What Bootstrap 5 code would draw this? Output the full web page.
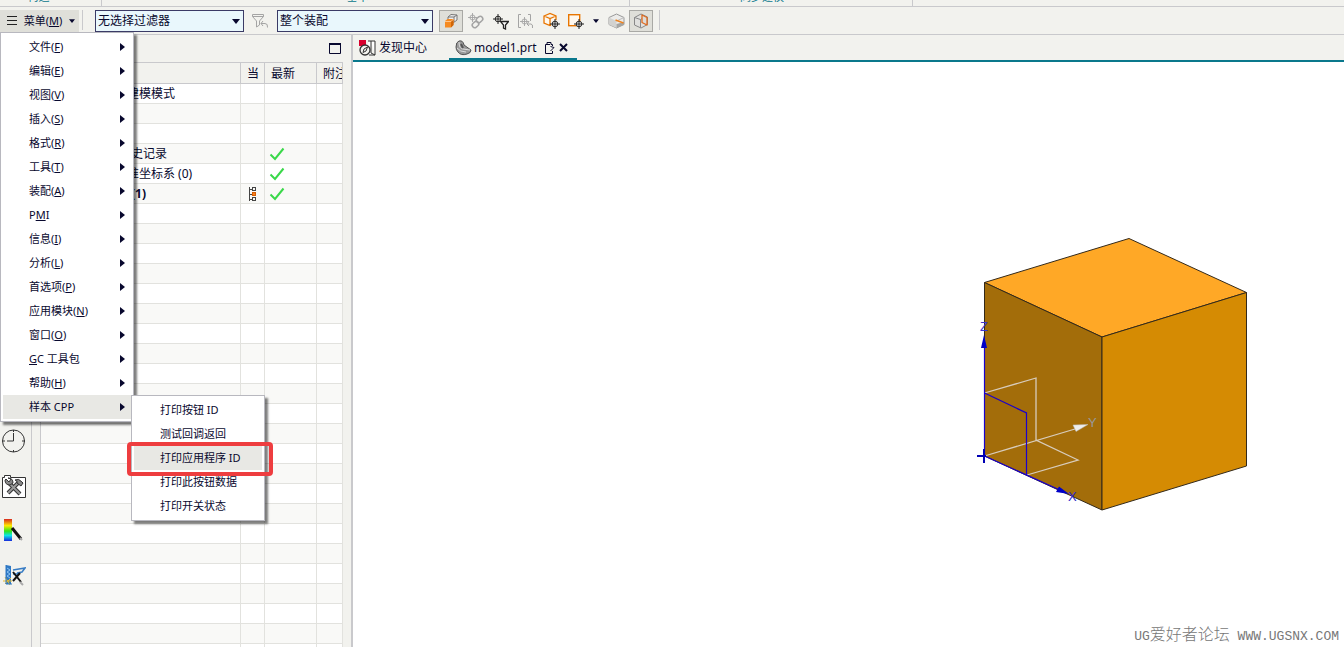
<!DOCTYPE html>
<html lang="zh-CN">
<head>
<meta charset="utf-8">
<meta name="viewport" content="width=device-width, initial-scale=1">
<title>model1.prt</title>
<link href="https://cdn.jsdelivr.net/npm/bootstrap@5.3.0/dist/css/bootstrap.min.css" rel="stylesheet">
<style>
  :root { --panel: #f2f2ee; --ink: #08082e; --teal: #0a788c; --rule: #c9c9cc; }
  body { font-family: "Noto Sans", "Noto Sans CJK SC", sans-serif; font-size: 12px; line-height: 20px; color: var(--ink); background: var(--panel); }
  button { color: var(--ink); }
  svg { display: block; flex: none; }
  u { text-underline-offset: 1px; }

  .ribbon-foot { height: 7px; border-bottom: 1px solid var(--rule); color: var(--teal); font-size: 11px; line-height: 14px; }
  .ribbon-foot > div { height: 6px; border-right: 1px solid var(--rule); display: flex; align-items: flex-end; justify-content: center; }
  .ribbon-foot span { margin-bottom: 2px; }
  .rf-a { width: 102px; padding-right: 24px; } .rf-b { width: 528px; padding-right: 16px; } .rf-c { width: 283px; padding-right: 18px; }

  .toolbar { height: 28px; border-bottom: 1px solid var(--rule); padding-top: 3px; }
  .menu-btn { width: 79px; height: 22px; background: #dfdfd9; border: 0; padding: 0 4px 0 7px; font-size: 11px; }
  .vsep { width: 1px; height: 20px; background: var(--rule); }
  .pick { height: 22px; }
  .pick select { appearance: none; width: 100%; height: 22px; border: 1px solid #3b3b66; background: #e9f7fc; color: var(--ink); font-size: 12px; line-height: 18px; padding: 0 20px 0 2px; border-radius: 0; }
  .pick svg { position: absolute; right: 4px; top: 9px; pointer-events: none; }
  .pick-a { width: 149px; margin-left: 12px; } .pick-b { width: 156px; margin-left: 5px; }
  .tools { gap: 1px; padding-left: 6px; }
  .tools .vsep { margin-left: 5px; }
  .tool { width: 24px; height: 22px; border: 0; background: none; padding: 0; display: flex; align-items: center; justify-content: center; }
  .tool.on { background: #dfdfd9; border: 1px solid #a9a9a5; }
  .tool.caret { width: 14px; }

  .nx-menu { min-width: 134px; padding: 2px; border: 1px solid #b8b8bf; border-radius: 0; box-shadow: 3px 3px 2px rgba(0,0,0,.5); font-size: 11px; color: var(--ink); background: #fff; margin: 0; }
  .nx-menu .dropdown-item { height: 24px; padding: 0 6px 0 26px; font-size: 11px; line-height: 24px; color: var(--ink); display: flex; justify-content: space-between; align-items: center; }
  .nx-menu .dropdown-item.on { background: #e8e8e4; }
  .nx-main { top: 100%; left: 0; z-index: 30; }
  .nx-sub { top: 0; left: 100%; z-index: 31; }
  .callout { position: absolute; inset: -4px -11px -6px -7px; border: 4px solid #ee3d3f; border-radius: 4px; pointer-events: none; z-index: 2; }

  .rail { width: 32px; border-right: 1px solid var(--rule); padding: 394px 0 0 2px; gap: 21px; }
  .rail button { width: 24px; height: 24px; padding: 0; border: 0; background: none; }
  .navigator { width: 321px; padding: 0 8px; border-right: 2px solid var(--rule); }
  .nav-head { height: 27px; padding: 0 2px; }
  .tree { table-layout: fixed; width: 303px; border-collapse: separate; border-spacing: 0; border-left: 1px solid var(--rule); background: #fff; }
  .tree th, .tree td { height: 20px; padding: 0 0 0 6px; line-height: 19px; font-weight: 400; border-right: 1px solid #e2e2de; border-bottom: 1px solid #e2e2de; white-space: nowrap; overflow: hidden; }
  .tree th { height: 22px; background: var(--panel); border-color: var(--rule); border-top: 1px solid var(--rule); }
  .tree tbody tr:nth-child(even) { background: #f9f9f7; }
  .tree td:first-child { padding-left: 90px; }
  .tree td.outer { padding-left: 86px; }
  .tree td:nth-child(3) { padding-left: 4px; }
  .tree td.node { font-weight: 700; }

  .tabs { height: 27px; border-bottom: 2px solid var(--teal); }
  .tabs .doc { height: 25px; border: 0; border-bottom: 2px solid transparent; background: none; padding: 2px 6px 0; display: flex; align-items: center; }
  .tabs .doc svg:first-child { margin-right: 2px; }
  .tabs .doc.on { border-color: var(--teal); margin-left: 16px; width: 128px; }
  .viewport { background: #fff; padding: 168px 90px 0 0; }
  .mark-line { position: absolute; right: 5px; bottom: 0; color: #777; font: 13px/20px "Liberation Mono", monospace; }
  .mark-line span { font: 300 16px/20px "Noto Sans CJK SC", sans-serif; }
</style>
</head>
<body class="d-flex flex-column vh-100 overflow-hidden">

<svg width="0" height="0" class="position-absolute" aria-hidden="true">
  <symbol id="right" viewBox="0 0 5 8"><path d="M0 0L5 4L0 8Z" fill="#08082e"/></symbol>
  <symbol id="down" viewBox="0 0 8 5"><path d="M0 0H8L4 5Z" fill="#08082e"/></symbol>
  <symbol id="tick" viewBox="0 0 16 14"><path d="M1.500 7.500L6 12L14.500 1.500" fill="none" stroke="#3ad84a" stroke-width="2"/></symbol>
  <symbol id="target" viewBox="0 0 10 10"><g fill="none" stroke="currentColor"><circle cx="5" cy="5" r="2.800"/><path d="M5 0V10M0 5H10"/></g></symbol>
</svg>

<div class="ribbon-foot d-flex flex-shrink-0 overflow-hidden">
  <div class="rf-a"><span>构造</span></div>
  <div class="rf-b"><span>基本</span></div>
  <div class="rf-c"><span>同步建模</span></div>
</div>

<header class="toolbar d-flex align-items-start flex-shrink-0">
  <div class="dropdown">
    <button class="menu-btn d-flex align-items-center justify-content-between" type="button" aria-expanded="true">
      <svg width="10" height="10" stroke="#222" fill="none"><path d="M0 .5H10M0 4.500H10M0 8.500H10"/></svg>
      <span>菜单(<u>M</u>)</span>
      <svg width="6" height="4"><use href="#down"/></svg>
    </button>
    <ul class="dropdown-menu show nx-menu nx-main">
      <li><button class="dropdown-item" type="button"><span>文件(<u>F</u>)</span><svg width="5" height="8"><use href="#right"/></svg></button></li>
      <li><button class="dropdown-item" type="button"><span>编辑(<u>E</u>)</span><svg width="5" height="8"><use href="#right"/></svg></button></li>
      <li><button class="dropdown-item" type="button"><span>视图(<u>V</u>)</span><svg width="5" height="8"><use href="#right"/></svg></button></li>
      <li><button class="dropdown-item" type="button"><span>插入(<u>S</u>)</span><svg width="5" height="8"><use href="#right"/></svg></button></li>
      <li><button class="dropdown-item" type="button"><span>格式(<u>R</u>)</span><svg width="5" height="8"><use href="#right"/></svg></button></li>
      <li><button class="dropdown-item" type="button"><span>工具(<u>T</u>)</span><svg width="5" height="8"><use href="#right"/></svg></button></li>
      <li><button class="dropdown-item" type="button"><span>装配(<u>A</u>)</span><svg width="5" height="8"><use href="#right"/></svg></button></li>
      <li><button class="dropdown-item" type="button"><span>P<u>M</u>I</span><svg width="5" height="8"><use href="#right"/></svg></button></li>
      <li><button class="dropdown-item" type="button"><span>信息(<u>I</u>)</span><svg width="5" height="8"><use href="#right"/></svg></button></li>
      <li><button class="dropdown-item" type="button"><span>分析(<u>L</u>)</span><svg width="5" height="8"><use href="#right"/></svg></button></li>
      <li><button class="dropdown-item" type="button"><span>首选项(<u>P</u>)</span><svg width="5" height="8"><use href="#right"/></svg></button></li>
      <li><button class="dropdown-item" type="button"><span>应用模块(<u>N</u>)</span><svg width="5" height="8"><use href="#right"/></svg></button></li>
      <li><button class="dropdown-item" type="button"><span>窗口(<u>O</u>)</span><svg width="5" height="8"><use href="#right"/></svg></button></li>
      <li><button class="dropdown-item" type="button"><span><u>G</u>C 工具包</span><svg width="5" height="8"><use href="#right"/></svg></button></li>
      <li><button class="dropdown-item" type="button"><span>帮助(<u>H</u>)</span><svg width="5" height="8"><use href="#right"/></svg></button></li>
      <li class="position-relative"><button class="dropdown-item on" type="button"><span>样本 CPP</span><svg width="5" height="8"><use href="#right"/></svg></button>
        <ul class="dropdown-menu show nx-menu nx-sub">
          <li><button class="dropdown-item" type="button">打印按钮 ID</button></li>
          <li><button class="dropdown-item" type="button">测试回调返回</button></li>
          <li class="position-relative"><button class="dropdown-item on" type="button">打印应用程序 ID</button><div class="callout"></div></li>
          <li><button class="dropdown-item" type="button">打印此按钮数据</button></li>
          <li><button class="dropdown-item" type="button">打印开关状态</button></li>
        </ul>
      </li>
    </ul>
  </div>
  <div class="vsep" style="margin-left:3px"></div>
  <div class="pick pick-a position-relative">
    <select aria-label="选择过滤器"><option>无选择过滤器</option></select>
    <svg width="8" height="5"><use href="#down"/></svg>
  </div>
  <button class="tool ms-1" type="button" aria-label="重置过滤器">
    <svg width="18" height="16" fill="none" stroke="#a4a4a4"><path d="M1.500 1.500H12.500V3.500L8.500 8V12L5.500 14V8L1.500 3.500ZM1.500 3.500H12.500M12 8L10 10.500L12 13M10 10.500H14Q17 10.500 16.500 14.500"/></svg>
  </button>
  <div class="pick pick-b position-relative">
    <select aria-label="选择范围"><option>整个装配</option></select>
    <svg width="8" height="5"><use href="#down"/></svg>
  </div>
  <div class="tools d-flex">
    <button class="tool on" type="button" aria-label="实体">
      <svg width="16" height="16" stroke-linejoin="round"><path d="M5 4L8 1.500L14 2V7L10 10H5Z" fill="#eee" stroke="#777"/><path d="M5 4H11L14 2M11 4V9" fill="none" stroke="#777"/><path d="M2 8L4.500 6H10.500V12L8 14.500H2Z" fill="#f58a20"/><path d="M8 8.500L10.500 6V12L8 14.500Z" fill="#cf6507"/><path d="M2 8.500H8L10.500 6" fill="none" stroke="#ffc48a"/></svg>
    </button>
    <button class="tool" type="button" aria-label="相关点">
      <svg width="18" height="18" color="#a4a4a4"><use href="#target" x="1" y="1" width="9" height="9"/><g fill="none" stroke="#a4a4a4" stroke-width="1.500"><rect x="9" y="5" width="7" height="5" rx="2.500" transform="rotate(-40 12.500 7.500)"/><rect x="5" y="10" width="7" height="5" rx="2.500" transform="rotate(-40 8.500 12.500)"/></g></svg>
    </button>
    <button class="tool" type="button" aria-label="点过滤器">
      <svg width="16" height="17" color="#222"><use href="#target" x="0" y="1" width="10" height="10"/><path d="M7.500 8.500H15.500L12.500 12V16L10.500 15V12Z" fill="#fff" stroke="#222" stroke-width="1.300"/></svg>
    </button>
    <button class="tool" type="button" aria-label="范围点">
      <svg width="18" height="17" color="#a4a4a4"><use href="#target" x="3" y="4" width="9" height="9"/><path d="M4 1.500H1.500V14.500H4M11 1.500H13.500V8M12 8.500L10 11L12 13M10 11H14Q16 11 15.500 15" fill="none" stroke="#a4a4a4"/></svg>
    </button>
    <button class="tool" type="button" aria-label="定位体">
      <svg width="17" height="18" color="#222"><path d="M1 4L7 1.500L13 4V11L7 13.500L1 11ZM1 4L7 6.500L13 4M7 6.500V13" fill="#fff8ee" stroke="#e87500" stroke-width="1.300"/><circle cx="12" cy="12" r="4" fill="#eee"/><use href="#target" x="7" y="7" width="10" height="10"/></svg>
    </button>
    <button class="tool" type="button" aria-label="框选">
      <svg width="16" height="17" color="#222"><rect x=".7" y="1.700" width="11" height="11" fill="#fff8ee" stroke="#e87500" stroke-width="1.400"/><circle cx="11" cy="11" r="3" fill="#eee"/><use href="#target" x="6" y="6" width="10" height="10"/></svg>
    </button>
    <button class="tool caret" type="button" aria-label="更多选项"><svg width="6" height="4"><use href="#down"/></svg></button>
    <button class="tool" type="button" aria-label="剖切体">
      <svg width="17" height="16" stroke-linejoin="round"><path d="M1 4.500L8.500 1L16 4.500V11.500L8.500 15L1 11.500Z" fill="#ececea" stroke="#999"/><path d="M1 4.500L8.500 8V15L1 11.500Z" fill="#d2d2d0"/><path d="M8.500 11L16 9V11.500L8.500 15Z" fill="#a5a5a3"/><path d="M8.500 8L16 4.500" fill="none" stroke="#bbb"/><path d="M7.500 7L15.500 10" fill="none" stroke="#ee8420" stroke-width="1.500"/></svg>
    </button>
    <button class="tool on" type="button" aria-label="编辑截面">
      <svg width="16" height="16" stroke-linejoin="round"><path d="M1.500 4.500L8 1L14.500 4V11.500L8 15L1.500 12Z" fill="#e0e0de" stroke="#888"/><path d="M1.500 4.500L7.500 6.500V14.500M7.500 6.500L10 5" fill="none" stroke="#888"/><path d="M9 2L14 4.500V12L9 9.500Z" fill="#dcdcda" stroke="#e06a1d" stroke-width="1.300"/></svg>
    </button>
    <div class="vsep"></div>
  </div>
</header>

<main class="d-flex flex-grow-1" style="min-height:0">
  <nav class="rail d-flex flex-column flex-shrink-0" aria-label="资源条">
    <button type="button" aria-label="历史记录">
      <svg width="24" height="24" fill="none" stroke="#333"><circle cx="11.500" cy="12" r="11"/><path d="M11.500 4V12H5M11.500 1V3M11.500 21V23M.5 12H3M20 12H23"/></svg>
    </button>
    <button type="button" aria-label="加工向导">
      <svg width="25" height="25"><path d="M.5 3.500H2.500V1.500H8.500V3.500H23.500V23.500H.5Z" fill="#fff" stroke="#333"/><path d="M6 19L17 8M7 9L18 20" stroke="#333" stroke-width="4"/><path d="M6 19L17 8M7 9L18 20" stroke="#999" stroke-width="2"/><path d="M4 5L7 8L9 5L6 4Q11 4 11 9L8 11Q3 11 3 6ZM13 6Q17 4 20 8L21 9L19 12L15 9Q16 7 13 6Z" fill="#888" stroke="#333"/></svg>
    </button>
    <button type="button" aria-label="着色">
      <svg width="24" height="24"><defs><linearGradient id="spectrum" x2="0" y2="1"><stop stop-color="#d9281d"/><stop offset=".3" stop-color="#ffea00"/><stop offset=".55" stop-color="#31e51b"/><stop offset=".75" stop-color="#0de4e8"/><stop offset="1" stop-color="#1629dc"/></linearGradient></defs><path d="M2 0H10V22H2Z" fill="url(#spectrum)"/><path d="M10 9L19 20" stroke="#111" stroke-width="3"/><path d="M18 19L20 21" stroke="#aaa" stroke-width="2"/></svg>
    </button>
    <button type="button" aria-label="可视化向导">
      <svg width="24" height="24"><path d="M4 1L9 2V20H4Z" fill="#2f78c4"/><path d="M5 4L8 6L5 8L8 10L5 12L8 14" stroke="#8bc3f2" fill="none"/><path d="M11 6L23 4L20 8L15 9M11 10H18" stroke="#397dc4" stroke-width="1.500" fill="none"/><path d="M1 17H10M3 13L8 21M9 14L3 20" stroke="#e7bb28"/><path d="M4 1V20H10" stroke="#2f78c4" fill="none"/><path d="M11 8L19 18M18 9L11 17" stroke="#111" stroke-width="2"/><path d="M18 18L21 21" stroke="#aaa" stroke-width="2"/></svg>
    </button>
  </nav>

  <section class="navigator flex-shrink-0 overflow-hidden">
    <div class="nav-head d-flex align-items-center justify-content-end">
      <button type="button" class="border-0 bg-transparent p-0" aria-label="最大化"><svg width="12" height="12"><path d="M.5 1.500H11.500V10.500H.5Z" fill="none" stroke="#08082e"/><path d="M0 1H12" stroke="#08082e" stroke-width="2"/></svg></button>
    </div>
    <table class="tree">
      <colgroup><col style="width:200px"><col style="width:24px"><col style="width:52px"><col></colgroup>
      <thead><tr><th></th><th>当</th><th>最新</th><th>附注</th></tr></thead>
      <tbody id="treeRows">
        <tr><td class="outer">建模模式</td><td></td><td></td><td></td></tr>
        <tr><td></td><td></td><td></td><td></td></tr>
        <tr><td></td><td></td><td></td><td></td></tr>
        <tr><td>史记录</td><td></td><td><svg width="16" height="14"><use href="#tick"/></svg></td><td></td></tr>
        <tr><td class="outer">准坐标系 (0)</td><td></td><td><svg width="16" height="14"><use href="#tick"/></svg></td><td></td></tr>
        <tr><td class="node">(1)</td><td><svg width="11" height="16" fill="none" stroke="#444"><path d="M2.500 1V15M2.500 3.500H5M2.500 8.500H5M2.500 13.500H5"/><rect x="5.500" y="1.500" width="3" height="3"/><rect x="5.500" y="6.500" width="3" height="3" fill="#f58220" stroke="#d85c00"/><rect x="5.500" y="11.500" width="3" height="3"/></svg></td><td><svg width="16" height="14"><use href="#tick"/></svg></td><td></td></tr>
      </tbody>
    </table>
  </section>

  <section class="d-flex flex-column flex-grow-1" style="min-width:0">
    <div class="tabs d-flex flex-shrink-0">
      <button class="doc" type="button">
        <svg width="18" height="18"><path d="M9 2H16V16H10M12 2V14L16 16" fill="#fff" stroke="#333"/><path d="M0 1H7V7H0Z" fill="#d8002d"/><circle cx="6" cy="11" r="5" fill="#f2f2ee" stroke="#333" stroke-width="1.300"/><path d="M8.500 8L7 12L4 13.500L5 10Z" fill="none" stroke="#333"/></svg>
        发现中心
      </button>
      <button class="doc on" type="button">
        <svg width="17" height="16"><path d="M1 7Q1 2 4 1Q8 0 9 5L16 10Q16 13 12 14Q6 16 3 12Q1 10 1 7Z" fill="#999" stroke="#555"/><path d="M4 2Q4 9 8 9L15 10M2 8Q5 12 11 12" fill="none" stroke="#ddd"/><path d="M6 4L8 8" stroke="#555" stroke-width="2"/></svg>
        <span>model1.prt</span>
        <svg width="10" height="12" class="ms-2 me-1" fill="none" stroke="#08082e"><path d="M5 2.500H.5V11.500H7.500V9M2 2.500V.5H6V2.500H7.500V4M5.500 4.500L9 5.500L5.500 9"/></svg>
        <svg width="9" height="9" stroke="#08082e" stroke-width="2"><path d="M1 1L8 8M8 1L1 8"/></svg>
      </button>
    </div>
    <div class="viewport d-flex flex-grow-1 justify-content-end align-items-start position-relative overflow-hidden">
      <svg width="280" height="290" viewBox="974 230 280 290" role="img" aria-label="方块模型与坐标系">
        <g stroke="#33291a" stroke-linejoin="round">
          <path d="M984.500 282.500L1129 238.500L1246.500 292.500L1102 337Z" fill="#ffa826"/>
          <path d="M984.500 282.500L1102 337V510L984.500 456Z" fill="#a36d0a"/>
          <path d="M1102 337L1246.500 292.500V466L1102 510Z" fill="#d58b03"/>
        </g>
        <g fill="none" stroke="#d8ccbc" stroke-width="1.300">
          <path d="M984.500 393L1036 378V440L1078 460L1027 475M984.500 456L1075 429"/>
        </g>
        <path d="M1088 424.500L1073 425L1076 431.500Z" fill="#eee" stroke="#bbb" stroke-width=".5"/>
        <path d="M984.500 456V347M984.500 393L1026.500 413V475M984.500 456L1062 491" fill="none" stroke="#1a00cc" stroke-width="1.200"/>
        <path d="M977 456H986M984 449V463" stroke="#0000b4" stroke-width="2"/>
        <path d="M984 335L987 348H981ZM1069 494L1056 492L1059 486.500Z" fill="#0000c8"/>
        <g font-family="Liberation Sans, sans-serif" font-size="13"><text x="980" y="331" fill="#3d35cc">Z</text><text x="1088" y="427" fill="#999">Y</text><text x="1068" y="501" fill="#3028c8">X</text></g>
      </svg>
      <div class="mark-line text-nowrap">UG<span>爱好者论坛</span> WWW.UGSNX.COM</div>
    </div>
  </section>
</main>

<script src="https://cdn.jsdelivr.net/npm/bootstrap@5.3.0/dist/js/bootstrap.bundle.min.js"></script>
<script>
  // Fill the rest of the navigator with empty grid rows.
  const rows = document.getElementById('treeRows');
  const needed = Math.ceil(window.innerHeight / 20);
  while (rows.rows.length < needed) {
    const tr = rows.insertRow();
    for (let i = 0; i < 4; i++) tr.insertCell();
  }
</script>
</body>
</html>
